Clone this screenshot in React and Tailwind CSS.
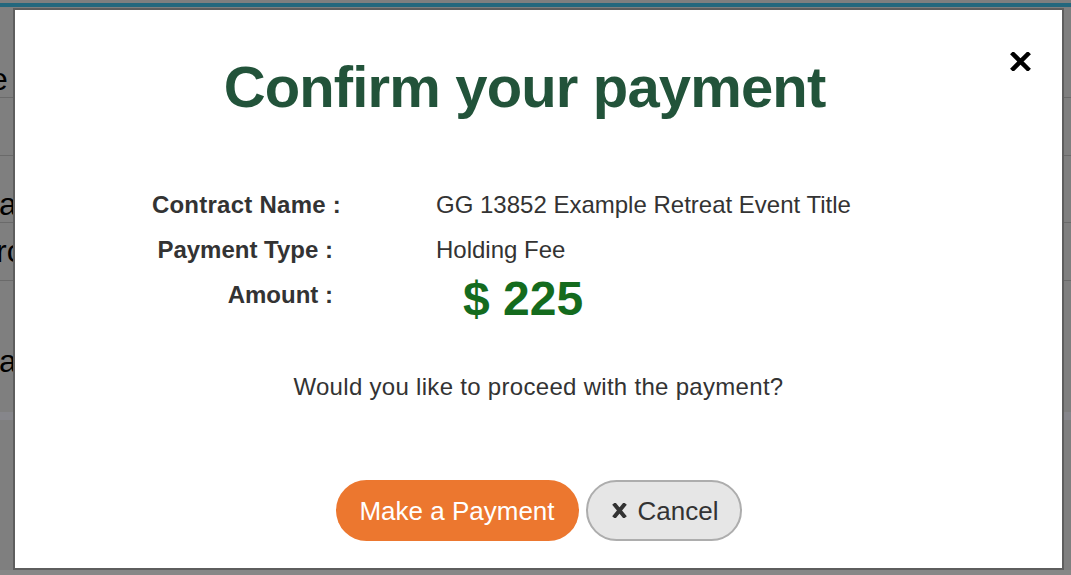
import React from "react";

const font = { fontFamily: '"Liberation Sans", Arial, Helvetica, sans-serif' };

function CloseIcon({ className, stroke = "#000", w = 21, h = 19, sw = 4.5 }) {
  return (
    <svg className={className} width={w} height={h} viewBox={`0 0 ${w} ${h}`} fill="none">
      <path d={`M${sw / 2 + 1} ${sw / 2} L${w - sw / 2 - 1} ${h - sw / 2} M${w - sw / 2 - 1} ${sw / 2} L${sw / 2 + 1} ${h - sw / 2}`} stroke={stroke} strokeWidth={sw} strokeLinecap="square" />
    </svg>
  );
}

export default function App() {
  return (
    <div className="relative w-[1071px] h-[575px] overflow-hidden bg-[#7f7f7f] text-black" style={font}>
      {/* dimmed page behind the modal */}
      <div className="h-[3px] bg-[#7f7f7f]" />
      <div className="h-[4px] bg-[#23677d]" />
      <div className="flex flex-col text-[32px] leading-[32px]">
        <div className="h-[91px] border-b border-[#6a6a6a] flex items-end pb-[2px]">
          <span className="-ml-[10px]">e</span>
        </div>
        <div className="h-[58px] border-b border-[#6a6a6a]" />
        <div className="h-[67px] border-b border-[#6a6a6a] flex items-end pb-[2px]">
          <span className="-ml-[1px]">ab</span>
        </div>
        <div className="h-[58px] border-b border-[#6a6a6a] flex items-start pt-[12px]">
          <span className="-ml-[4px]">rch</span>
        </div>
        <div className="h-[131px] flex items-start pt-[64px]">
          <span className="-ml-[1px]">ave</span>
        </div>
        <div className="h-[8px] bg-[#86868b]" />
        <div className="h-[150px]" />
        <div className="h-[20px] bg-[#878787]" />
      </div>

      {/* modal */}
      <div className="absolute left-[13px] top-[8px] w-[1051px] h-[562px] bg-white border-2 border-[#5e5e5e] flex flex-col">
        <button className="absolute right-[31px] top-[42px] w-[21px] h-[19px]" aria-label="Close">
          <CloseIcon />
        </button>

        <h1 className="mt-[48px] pr-[28px] text-center text-[58px] leading-[58px] font-bold text-[#22533a] tracking-[-0.85px]">
          Confirm your payment
        </h1>

        <div className="mt-[77px] flex flex-col gap-[22px] text-[24px] leading-[24px] text-[#333]">
          <div className="flex items-start">
            <div className="w-[318px] text-right font-bold">
              <span className="-mr-[8px] inline-block tracking-[0.25px]">Contract Name :</span>
            </div>
            <div className="ml-[103px]">GG 13852 Example Retreat Event Title</div>
          </div>
          <div className="flex items-start -mt-px">
            <div className="w-[318px] text-right font-bold">Payment Type :</div>
            <div className="ml-[103px]">Holding Fee</div>
          </div>
          <div className="flex items-start -mt-[1px]">
            <div className="w-[318px] text-right font-bold">Amount :</div>
            <div className="ml-[130px] -mt-[8px] text-[48px] leading-[48px] font-bold text-[#146b1e]">$ 225</div>
          </div>
        </div>

        <p className="mt-[52px] text-center text-[24px] leading-[24px] text-[#333] tracking-[0.3px]">
          Would you like to proceed with the payment?
        </p>

        <div className="mt-[81px] flex justify-center gap-[7px]">
          <button className="h-[61px] w-[243px] rounded-full bg-[#ec772f] text-white text-[26px] leading-[26px] flex items-center justify-center">
            Make a Payment
          </button>
          <button className="h-[61px] w-[156px] rounded-full bg-[#e6e6e6] border-2 border-[#adadad] text-[#333] text-[26px] leading-[26px] flex items-center pl-[24px]">
            <CloseIcon w={15} h={15} sw={4} stroke="#333" />
            <span className="ml-[11px]">Cancel</span>
          </button>
        </div>
      </div>
    </div>
  );
}
